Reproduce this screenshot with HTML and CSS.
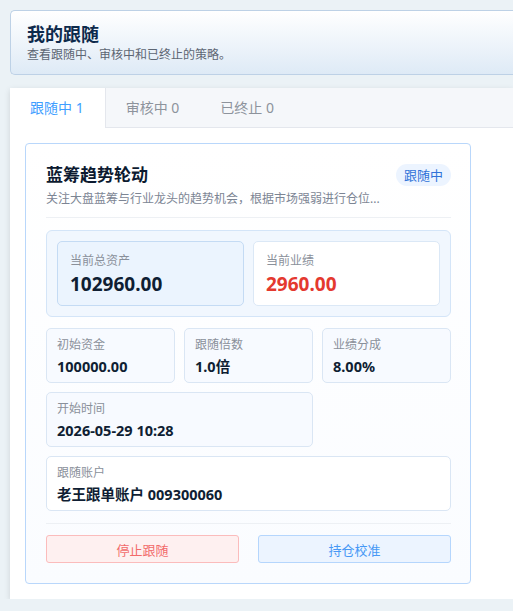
FILE: index.html
```html
<!DOCTYPE html>
<html lang="zh-CN">
<head>
    <meta charset="UTF-8">
    <meta name="viewport" content="width=device-width, initial-scale=1.0">
    <title>我的跟随</title>
    <link rel="stylesheet" href="styles.css">
</head>
<body>

    <div class="page-head">
        <h1>我的跟随</h1>
        <p>查看跟随中、审核中和已终止的策略。</p>
    </div>

    <div class="panel">
        <div class="tabs">
            <div class="tab active">跟随中 1</div>
            <div class="tab">审核中 0</div>
            <div class="tab">已终止 0</div>
        </div>

        <div class="panel-body">
            <div class="card">
                <div class="card-top">
                    <h2>蓝筹趋势轮动</h2>
                    <span class="badge">跟随中</span>
                </div>
                <p class="desc">关注大盘蓝筹与行业龙头的趋势机会，根据市场强弱进行仓位...</p>

                <div class="summary">
                    <div class="sum-box main">
                        <div class="label">当前总资产</div>
                        <div class="big">102960.00</div>
                    </div>
                    <div class="sum-box">
                        <div class="label">当前业绩</div>
                        <div class="big red">2960.00</div>
                    </div>
                </div>

                <div class="info-grid">
                    <div class="info">
                        <div class="label">初始资金</div>
                        <div class="val">100000.00</div>
                    </div>
                    <div class="info">
                        <div class="label">跟随倍数</div>
                        <div class="val">1.0倍</div>
                    </div>
                    <div class="info">
                        <div class="label">业绩分成</div>
                        <div class="val">8.00%</div>
                    </div>
                    <div class="info span2">
                        <div class="label">开始时间</div>
                        <div class="val">2026-05-29 10:28</div>
                    </div>
                    <div class="info span3 white">
                        <div class="label">跟随账户</div>
                        <div class="val">老王跟单账户 009300060</div>
                    </div>
                </div>

                <div class="actions">
                    <button class="btn btn-stop">停止跟随</button>
                    <button class="btn btn-check">持仓校准</button>
                </div>
            </div>
        </div>
    </div>

</body>
</html>
```

FILE: styles.css
```css
body {
    font-family: "Noto Sans", "Noto Sans CJK SC", sans-serif;
    background-color: #ebf2f6;
    margin: 0;
    padding: 10px 0 0 10px;
    color: #0f1e33;
}
h1, h2, p {
    margin: 0;
}
.page-head {
    background: linear-gradient(180deg, #ffffff 0%, #deeaf6 100%);
    border: 1px solid #bdd1e6;
    border-right: none;
    border-radius: 5px 0 0 5px;
    padding: 11px 16px 10px;
    height: 42px;
}
.page-head h1 {
    font-size: 18px;
    line-height: 24px;
    color: #0d2a4c;
    font-weight: 700;
}
.page-head p {
    font-size: 12px;
    line-height: 18px;
    color: #5d6673;
}
.panel {
    margin-top: 13px;
    background: #fff;
    height: 511px;
    box-shadow: 0 2px 6px rgba(0, 0, 0, 0.13);
}
.tabs {
    display: flex;
    background: #f5f7fa;
    border-bottom: 1px solid #e4e7ed;
    height: 39px;
}
.tab {
    padding: 0 21px 0 20px;
    line-height: 39px;
    font-size: 14px;
    color: #8d939c;
}
.tab.active {
    background: #fff;
    color: #409eff;
    border-right: 1px solid #e4e7ed;
    height: 40px;
}
.panel-body {
    padding: 15px;
}
.card {
    box-sizing: border-box;
    width: 446px;
    border: 1px solid #b9d7fb;
    border-radius: 4px;
    padding: 19px 19px 20px 20px;
    background: linear-gradient(180deg, #ffffff 0%, #fafcff 100%);
}
.card-top {
    display: flex;
    align-items: center;
    justify-content: space-between;
    height: 24px;
}
.card-top h2 {
    font-size: 17px;
    line-height: 24px;
    font-weight: 700;
    color: #0c1a30;
}
.badge {
    background: #ecf4ff;
    color: #2f72d8;
    font-size: 13px;
    line-height: 22px;
    padding: 0 8px;
    border-radius: 11px;
}
.desc {
    margin-top: 3px;
    font-size: 12px;
    line-height: 18px;
    color: #7c8594;
    white-space: nowrap;
    padding-bottom: 9px;
    border-bottom: 1px solid #edf0f4;
}
.summary {
    margin-top: 12px;
    background: #f1f7fe;
    border: 1px solid #d4e5f8;
    border-radius: 6px;
    padding: 10px;
    display: grid;
    grid-template-columns: 1fr 1fr;
    gap: 9px;
}
.sum-box {
    background: #fff;
    border: 1px solid #dbe8f6;
    border-radius: 5px;
    padding: 10px 12px 9px;
}
.sum-box.main {
    background: #ebf4fe;
    border-color: #c4dbf4;
}
.label {
    font-size: 12px;
    line-height: 18px;
    color: #8a909a;
}
.big {
    margin-top: 2px;
    font-size: 19px;
    line-height: 24px;
    font-weight: 700;
    color: #0f1e33;
}
.big.red {
    color: #e4392f;
}
.info-grid {
    margin-top: 11px;
    display: grid;
    grid-template-columns: repeat(3, 1fr);
    gap: 9px;
}
.info {
    background: #f7faff;
    border: 1px solid #dae6f4;
    border-radius: 5px;
    padding: 7px 10px 6px;
}
.info.white {
    background: #fff;
}
.span2 {
    grid-column: span 2;
}
.span3 {
    grid-column: span 3;
}
.val {
    margin-top: 2px;
    font-size: 14.5px;
    line-height: 20px;
    font-weight: 700;
    color: #0f1e33;
}
.actions {
    margin-top: 12px;
    padding-top: 11px;
    border-top: 1px solid #edf0f4;
    display: grid;
    grid-template-columns: 1fr 1fr;
    gap: 19px;
}
.btn {
    font-family: inherit;
    font-size: 13px;
    height: 28px;
    border-radius: 3px;
    cursor: pointer;
}
.btn-stop {
    background: #fef0f0;
    border: 1px solid #fbbcbc;
    color: #f26a6a;
}
.btn-check {
    background: #ecf4ff;
    border: 1px solid #b5d6fd;
    color: #4798f5;
}
```
